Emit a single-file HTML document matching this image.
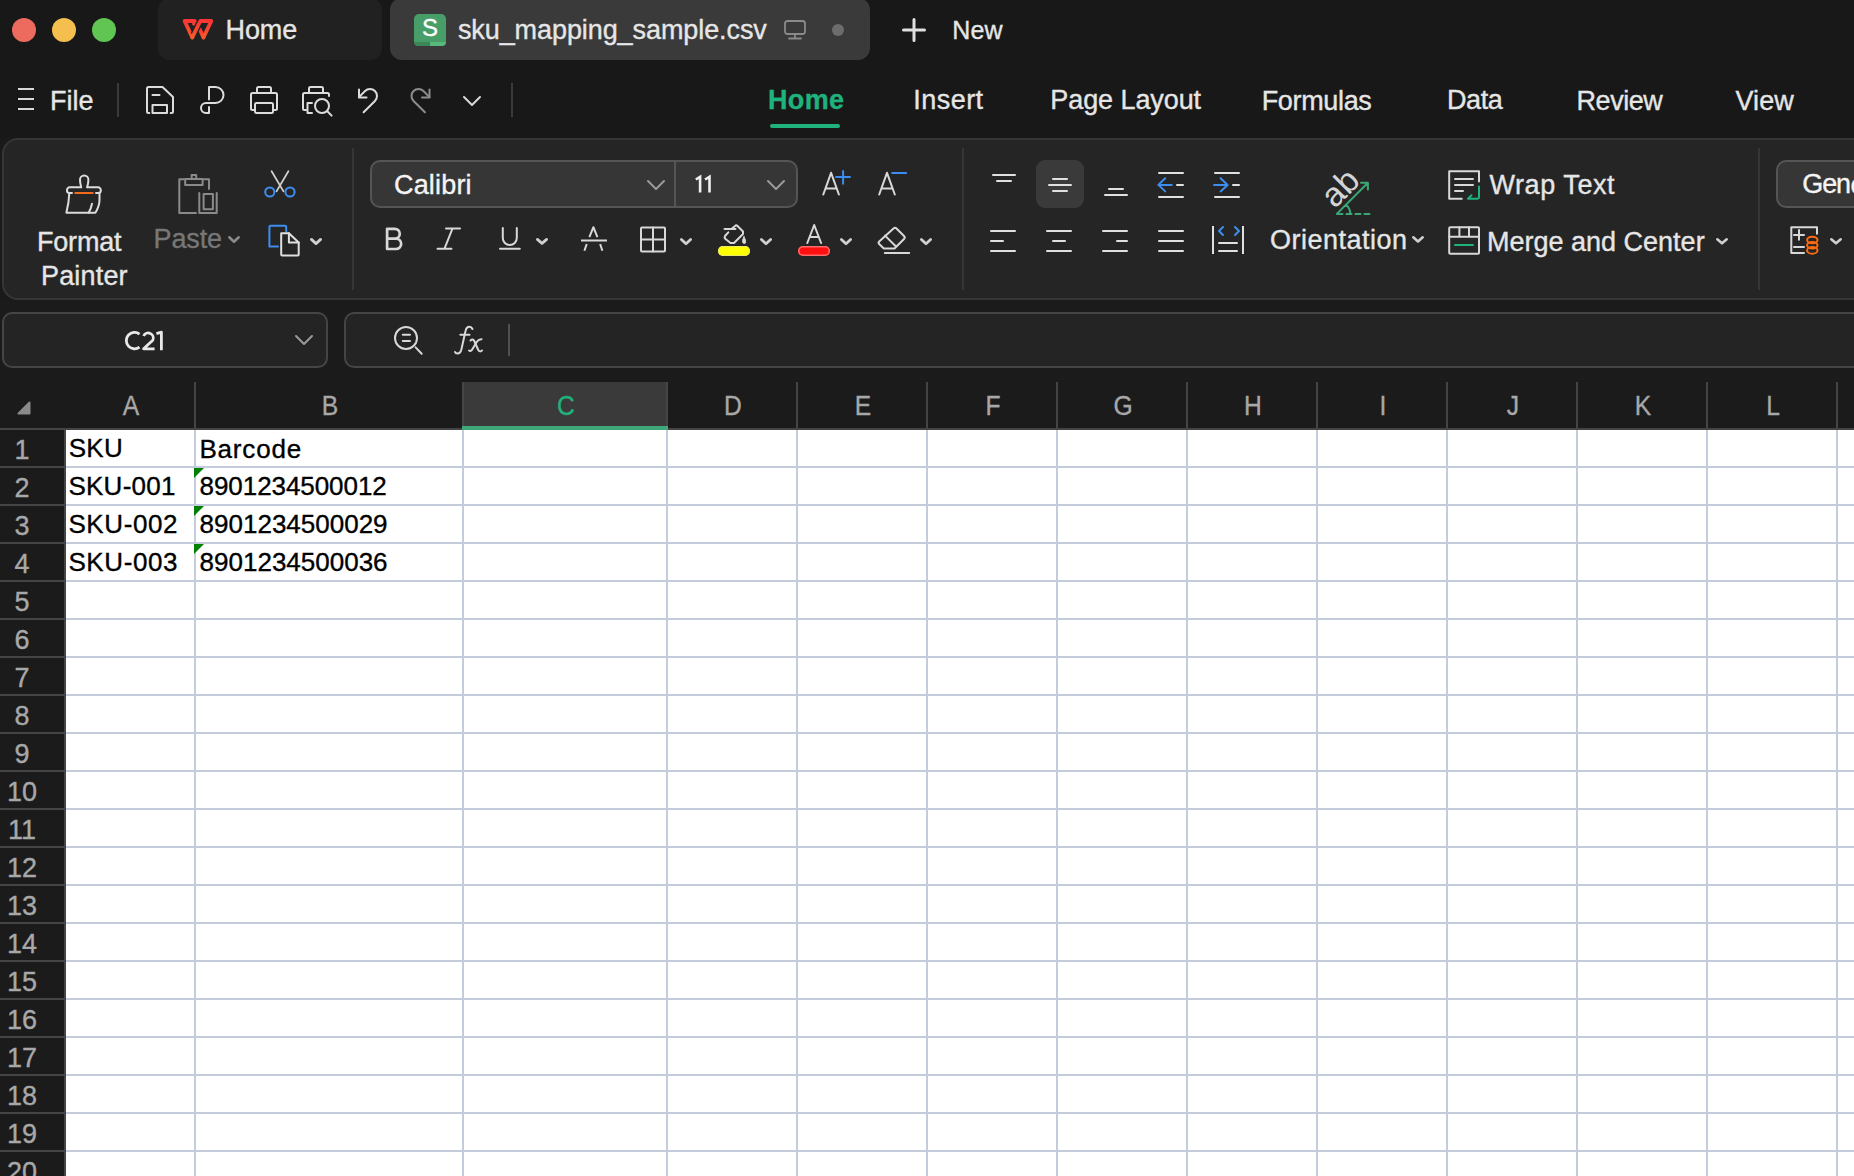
<!DOCTYPE html>
<html><head><meta charset="utf-8">
<style>
*{margin:0;padding:0;box-sizing:border-box}
html,body{width:1854px;height:1176px;overflow:hidden;background:#1a1a1a;font-family:"Liberation Sans",sans-serif;position:relative}
.a{position:absolute}
.t{position:absolute;white-space:nowrap;line-height:1;-webkit-text-stroke:0.35px currentColor}
svg{position:absolute;overflow:visible}
</style></head><body>
<div class="a" style="left:0px;top:0px;width:1854px;height:138px;background:#181818"></div>
<div class="a" style="left:12px;top:18px;width:24px;height:24px;border-radius:50%;background:#ec6a5e"></div>
<div class="a" style="left:52px;top:18px;width:24px;height:24px;border-radius:50%;background:#f4bf4f"></div>
<div class="a" style="left:92px;top:18px;width:24px;height:24px;border-radius:50%;background:#61c554"></div>
<div class="a" style="left:158px;top:-2px;width:224px;height:62px;border-radius:12px;background:#212121"></div>
<div class="a" style="left:390px;top:-2px;width:480px;height:62px;border-radius:12px;background:#3a3a3a"></div>
<svg style="left:178px;top:14px;" width="40" height="30" viewBox="0 0 40 30" fill="none" stroke="#dcdcdc" stroke-width="3.8" stroke-linecap="round" stroke-linejoin="round"><defs><linearGradient id="wg" x1="0" y1="0" x2="0" y2="1"><stop offset="0" stop-color="#fb3535"/><stop offset="1" stop-color="#f45a2a"/></linearGradient></defs><path d="M16 9.8 L16.8 7 H6.6 L14.3 23.4" stroke="url(#wg)"/><path d="M25.5 23.4 L21.9 15.6" stroke="url(#wg)"/><path d="M15.6 20.6 L21.2 9.2" stroke="#212121" stroke-width="6.4" stroke-linecap="butt"/><path d="M14.3 23.4 L22.3 7 H33.3 L25.5 23.4" stroke="url(#wg)"/></svg>
<div class="t" style="left:225.6px;top:17.0px;font-size:27px;color:#e6e6e6;letter-spacing:-0.13px;">Home</div>
<div class="a" style="left:414px;top:14px;width:32px;height:32px;border-radius:5px;background:#479e68;overflow:hidden"></div>
<div class="a" style="left:414px;top:42px;width:16px;height:4px;background:#3b8659;border-bottom-left-radius:5px"></div>
<div class="a" style="left:430px;top:42px;width:16px;height:4px;background:#57b97c;border-bottom-right-radius:5px"></div>
<div class="t" style="left:422.0px;top:16.0px;font-size:24px;color:#ffffff;">S</div>
<div class="t" style="left:457.9px;top:16.9px;font-size:27px;color:#e6e6e6;letter-spacing:-0.08px;">sku_mapping_sample.csv</div>
<svg style="left:784px;top:20px;" width="22" height="20" viewBox="0 0 22 20" fill="none" stroke="#8a8a8a" stroke-width="1.8" stroke-linecap="round" stroke-linejoin="round"><rect x="1" y="1" width="20" height="13" rx="2.5"/><path d="M11 14 V18 M5 18.5 H17"/></svg>
<div class="a" style="left:832px;top:24px;width:12px;height:12px;border-radius:50%;background:#6c6c6c"></div>
<svg style="left:902px;top:18px;" width="24" height="24" viewBox="0 0 24 24" fill="none" stroke="#e0e0e0" stroke-width="3" stroke-linecap="round" stroke-linejoin="round"><path d="M12 1.5 V22.5 M1.5 12 H22.5"/></svg>
<div class="t" style="left:952.2px;top:18.0px;font-size:25px;color:#e6e6e6;letter-spacing:0.20px;">New</div>
<svg style="left:18px;top:88px;" width="16" height="22" viewBox="0 0 16 22" fill="none" stroke="#d8d8d8" stroke-width="2" stroke-linecap="round" stroke-linejoin="round"><path d="M0 1 H16 M0 11 H16 M0 21 H16" stroke-linecap="butt"/></svg>
<div class="t" style="left:50.0px;top:88.3px;font-size:27px;color:#e6e6e6;">File</div>
<div class="a" style="left:117px;top:83px;width:2px;height:34px;background:#3a3a3a"></div>
<svg style="left:146px;top:86px;" width="28" height="28" viewBox="0 0 28 28" fill="none" stroke="#dcdcdc" stroke-width="2" stroke-linecap="round" stroke-linejoin="round"><path d="M3.3 27 H2.5 Q1 27 1 25.5 V2.5 Q1 1 2.5 1 H16.5 L27 11 V25.5 Q27 27 25.5 27 H24.7"/><path d="M6.5 9 H13.5"/><rect x="6.5" y="19" width="14.5" height="8"/></svg>
<svg style="left:200px;top:86px;" width="26" height="28" viewBox="0 0 26 28" fill="none" stroke="#dcdcdc" stroke-width="2" stroke-linecap="round" stroke-linejoin="round"><path d="M9 13.5 V1 H15.5 A8 8 0 0 1 15.5 17 H6 A5 5 0 0 0 6 27 H9 V21"/></svg>
<svg style="left:250px;top:86px;" width="28" height="28" viewBox="0 0 28 28" fill="none" stroke="#dcdcdc" stroke-width="2" stroke-linecap="round" stroke-linejoin="round"><path d="M7 7 V2.5 Q7 1 8.5 1 H19.5 Q21 1 21 2.5 V7"/><path d="M4 24 H2.5 Q1 24 1 22.5 V8.5 Q1 7 2.5 7 H25.5 Q27 7 27 8.5 V22.5 Q27 24 25.5 24 H24"/><rect x="5" y="17" width="18" height="10" rx="1.5"/></svg>
<svg style="left:302px;top:86px;" width="32" height="32" viewBox="0 0 32 32" fill="none" stroke="#dcdcdc" stroke-width="2" stroke-linecap="round" stroke-linejoin="round"><path d="M7 7 V2.5 Q7 1 8.5 1 H19.5 Q21 1 21 2.5 V7"/><path d="M4 24 H2.5 Q1 24 1 22.5 V8.5 Q1 7 2.5 7 H25.5 Q27 7 27 8.5 V10"/><path d="M10 17 H5.5 V27 H10"/><circle cx="20" cy="20" r="7"/><path d="M25.3 25.3 L29.6 29.6"/></svg>
<svg style="left:358px;top:88px;" width="24" height="26" viewBox="0 0 24 26" fill="none" stroke="#dcdcdc" stroke-width="2" stroke-linecap="round" stroke-linejoin="round"><path d="M1 9.1 L7.05 3.05 A7 7 0 0 1 16.95 12.95 L5.6 24.3"/><path d="M1 1.5 V9.5 H8.5"/></svg>
<svg style="left:410px;top:88px;" width="24" height="26" viewBox="0 0 24 26" fill="none" stroke="#8c8c8c" stroke-width="2" stroke-linecap="round" stroke-linejoin="round"><g transform="translate(20.5 0) scale(-1 1)"><path d="M1 9.1 L7.05 3.05 A7 7 0 0 1 16.95 12.95 L5.6 24.3"/><path d="M1 1.5 V9.5 H8.5"/></g></svg>
<svg style="left:463px;top:96px;" width="18" height="10" viewBox="0 0 18 10" fill="none" stroke="#d8d8d8" stroke-width="2" stroke-linecap="round" stroke-linejoin="round"><path d="M1 1 L9 9 L17 1"/></svg>
<div class="a" style="left:511px;top:83px;width:2px;height:34px;background:#3a3a3a"></div>
<div class="t" style="left:768.0px;top:87.0px;font-size:27px;color:#1fb27c;font-weight:700;letter-spacing:0.33px;">Home</div>
<div class="a" style="left:770px;top:124px;width:70px;height:4px;border-radius:2px;background:#1fb27c"></div>
<div class="t" style="left:913.2px;top:87.3px;font-size:27px;color:#e6e6e6;letter-spacing:0.48px;">Insert</div>
<div class="t" style="left:1050.3px;top:87.3px;font-size:27px;color:#e6e6e6;letter-spacing:-0.08px;">Page Layout</div>
<div class="t" style="left:1261.7px;top:88.3px;font-size:27px;color:#e6e6e6;letter-spacing:-0.34px;">Formulas</div>
<div class="t" style="left:1446.9px;top:87.3px;font-size:27px;color:#e6e6e6;letter-spacing:-0.37px;">Data</div>
<div class="t" style="left:1576.6px;top:88.3px;font-size:27px;color:#e6e6e6;letter-spacing:-0.48px;">Review</div>
<div class="t" style="left:1735.4px;top:88.3px;font-size:27px;color:#e6e6e6;letter-spacing:0.13px;">View</div>
<div class="a" style="left:2px;top:138px;width:1900px;height:162px;border-radius:16px;background:#252525;border:2px solid #363636"></div>
<svg style="left:64px;top:172px;" width="40" height="44" viewBox="0 0 40 44" fill="none" stroke="#dcdcdc" stroke-width="2" stroke-linecap="round" stroke-linejoin="round"><path d="M17.2 15.3 Q16 11 16 7.8 A4.2 4.2 0 0 1 24.4 7.8 Q24.4 11 23.2 15.3"/><path d="M17.2 15.3 H5.8 A2.85 2.85 0 0 0 5.8 21 H8"/><path d="M23.2 15.3 H34 A2.85 2.85 0 0 1 34 21 H32"/><path d="M5.3 21 Q5 30 2.4 40.8 H31.4 Q35.5 34 35.5 28 V21"/><path d="M28 31.8 Q27 37 24.6 40.8"/><path d="M10.5 21 H29.5" stroke="#f26b1d" stroke-linecap="butt"/></svg>
<div class="t" style="left:37.0px;top:229.0px;font-size:27px;color:#e6e6e6;letter-spacing:-0.20px;">Format</div>
<div class="t" style="left:41.0px;top:262.6px;font-size:27px;color:#e6e6e6;letter-spacing:0.17px;">Painter</div>
<svg style="left:176px;top:172px;" width="44" height="44" viewBox="0 0 44 44" fill="none" stroke="#8a8a8a" stroke-width="2" stroke-linecap="round" stroke-linejoin="round"><path d="M8 7.2 H3.3 V41 H20"/><path d="M28 7.2 H33 V17"/><path d="M9.2 7 H26.6 V13 H9.2 Z"/><path d="M15.7 3 H20.2 V7"/><path d="M15.7 7 V3"/><path d="M23.3 21 V41 H40.7 V21"/><rect x="27.6" y="22" width="9.3" height="15.2"/></svg>
<div class="t" style="left:153.6px;top:225.5px;font-size:27px;color:#777777;letter-spacing:-0.15px;">Paste</div>
<svg style="left:228px;top:235.5px;" width="12" height="7.0" viewBox="0 0 12 7.0" fill="none" stroke="#8a8a8a" stroke-width="2.6" stroke-linecap="round" stroke-linejoin="round"><path d="M1.30 1.30 L6.00 5.70 L10.70 1.30"/></svg>
<svg style="left:262px;top:168px;" width="36" height="32" viewBox="0 0 36 32" fill="none" stroke="#dcdcdc" stroke-width="2" stroke-linecap="round" stroke-linejoin="round"><path d="M9.6 3.2 L21.5 23.4" stroke="#cfcfcf" stroke-width="1.8"/><path d="M26.4 3.2 L14.5 23.4" stroke="#cfcfcf" stroke-width="1.8"/><circle cx="7.8" cy="24" r="4.6" stroke="#3d8ef0"/><circle cx="28" cy="24" r="4.6" stroke="#3d8ef0"/></svg>
<svg style="left:266px;top:222px;" width="36" height="36" viewBox="0 0 36 36" fill="none" stroke="#dcdcdc" stroke-width="2" stroke-linecap="round" stroke-linejoin="round"><path d="M20.2 9.5 V4.7 Q20.2 3.7 19.2 3.7 H4.4 Q3.4 3.7 3.4 4.7 V24.4 H12" stroke="#3d8ef0"/><path d="M15.2 11.3 H22.9 L32.7 20.5 V32.5 Q32.7 33.5 31.7 33.5 H16.2 Q15.2 33.5 15.2 32.5 Z" stroke="#e0e0e0"/><path d="M22.9 11.3 V20.5 H32.7" stroke="#e0e0e0"/></svg>
<svg style="left:310px;top:237.7px;" width="12" height="7.0" viewBox="0 0 12 7.0" fill="none" stroke="#d0d0d0" stroke-width="2.8" stroke-linecap="round" stroke-linejoin="round"><path d="M1.40 1.40 L6.00 5.60 L10.60 1.40"/></svg>
<div class="a" style="left:352px;top:148px;width:2px;height:142px;background:#363636"></div>
<div class="a" style="left:370px;top:160px;width:428px;height:48px;border-radius:10px;background:#363636;border:2px solid #555"></div>
<div class="a" style="left:674px;top:161px;width:2px;height:46px;background:#555"></div>
<div class="t" style="left:394.0px;top:171.7px;font-size:27px;color:#f4f4f4;letter-spacing:0.17px;">Calibri</div>
<svg style="left:647px;top:180px;" width="18" height="10" viewBox="0 0 18 10" fill="none" stroke="#9a9a9a" stroke-width="2" stroke-linecap="round" stroke-linejoin="round"><path d="M1 1 L9 9 L17 1"/></svg>
<svg style="left:690px;top:170px;" width="26" height="28" viewBox="0 0 26 28" fill="none" stroke="#f0f0f0" stroke-width="2.6" stroke-linecap="round" stroke-linejoin="round"><path d="M5.8 9.5 L10.1 6.8 V22.5 M15 9.5 L19.5 6.8 V22.5" stroke-linecap="butt" stroke-linejoin="miter"/></svg>
<svg style="left:767px;top:180px;" width="18" height="10" viewBox="0 0 18 10" fill="none" stroke="#9a9a9a" stroke-width="2" stroke-linecap="round" stroke-linejoin="round"><path d="M1 1 L9 9 L17 1"/></svg>
<svg style="left:820px;top:170px;" width="32" height="28" viewBox="0 0 32 28" fill="none" stroke="#dcdcdc" stroke-width="2" stroke-linecap="round" stroke-linejoin="round"><path d="M3.3 24.5 L11.1 2.8 L18.9 24.5 M5.9 18.6 H16.3" stroke="#d8d8d8"/><path d="M23.1 1 V13.7 M16.1 7 H30" stroke="#3d8ef0"/></svg>
<svg style="left:876px;top:170px;" width="32" height="28" viewBox="0 0 32 28" fill="none" stroke="#dcdcdc" stroke-width="2" stroke-linecap="round" stroke-linejoin="round"><path d="M3.2 24.5 L11 2.8 L18.8 24.5 M5.8 18.6 H16.2" stroke="#d8d8d8"/><path d="M16.2 3 H30.1" stroke="#3d8ef0"/></svg>
<svg style="left:384px;top:226px;" width="22" height="26" viewBox="0 0 22 26" fill="none" stroke="#d8d8d8" stroke-width="2.7" stroke-linecap="round" stroke-linejoin="round"><path d="M3.1 2.8 H10.8 A4.95 4.95 0 0 1 10.8 12.7 H3.1 Z M3.1 12.7 H12 A5.15 5.15 0 0 1 12 23 H3.1 Z"/></svg>
<svg style="left:436px;top:226px;" width="26" height="26" viewBox="0 0 26 26" fill="none" stroke="#d8d8d8" stroke-width="2" stroke-linecap="round" stroke-linejoin="round"><path d="M10 2.5 H24 M1.5 22.7 H15.5 M16.5 2.5 L8.5 22.7"/></svg>
<svg style="left:498px;top:226px;" width="24" height="26" viewBox="0 0 24 26" fill="none" stroke="#d8d8d8" stroke-width="2" stroke-linecap="round" stroke-linejoin="round"><path d="M4.8 2 V12 A7 7 0 0 0 18.8 12 V2 M2 22.7 H21.8"/></svg>
<svg style="left:536px;top:237.6px;" width="12" height="6.800000000000011" viewBox="0 0 12 6.800000000000011" fill="none" stroke="#cfcfcf" stroke-width="2.8" stroke-linecap="round" stroke-linejoin="round"><path d="M1.40 1.40 L6.00 5.40 L10.60 1.40"/></svg>
<svg style="left:580px;top:225px;" width="28" height="28" viewBox="0 0 28 28" fill="none" stroke="#d8d8d8" stroke-width="2" stroke-linecap="round" stroke-linejoin="round"><path d="M9.4 12.2 L13.4 2.2 L17.4 12.2 M1 15.6 H27 M6.7 19 L4.4 25.7 M20.1 19 L22.4 25.7" stroke-linecap="butt"/></svg>
<svg style="left:639px;top:225px;" width="28" height="28" viewBox="0 0 28 28" fill="none" stroke="#d8d8d8" stroke-width="2" stroke-linecap="round" stroke-linejoin="round"><rect x="2" y="2.4" width="24" height="24" rx="1"/><path d="M14 2.4 V26.4 M2 14.4 H26"/></svg>
<svg style="left:680px;top:237.6px;" width="12" height="7.200000000000017" viewBox="0 0 12 7.200000000000017" fill="none" stroke="#cfcfcf" stroke-width="2.8" stroke-linecap="round" stroke-linejoin="round"><path d="M1.40 1.40 L6.00 5.80 L10.60 1.40"/></svg>
<svg style="left:714px;top:218px;" width="40" height="30" viewBox="0 0 40 30" fill="none" stroke="#d8d8d8" stroke-width="2" stroke-linecap="round" stroke-linejoin="round"><path d="M14.3 14.3 L11 18 Q10 19.5 11.5 21 L16.5 25 H20 L29 16 V13.5 L23.5 8 Q22.2 6.8 21 8 L17.5 11"/><path d="M10.5 11 H21.5"/><path d="M30 18.6 Q27.7 22.5 28.8 24.8 Q30 26.2 31.6 25 Q32.3 22.5 30 18.6 Z" fill="#d8d8d8" stroke-width="0.8"/></svg>
<div class="a" style="left:718px;top:246px;width:32px;height:10px;border-radius:5px;background:#ffff00;box-shadow:0 0 0 1px #e9e96a inset"></div>
<svg style="left:760px;top:237.6px;" width="12" height="7.200000000000017" viewBox="0 0 12 7.200000000000017" fill="none" stroke="#cfcfcf" stroke-width="2.8" stroke-linecap="round" stroke-linejoin="round"><path d="M1.40 1.40 L6.00 5.80 L10.60 1.40"/></svg>
<svg style="left:804px;top:222px;" width="22" height="26" viewBox="0 0 22 26" fill="none" stroke="#d8d8d8" stroke-width="2" stroke-linecap="round" stroke-linejoin="round"><path d="M3.3 21 L10.2 3 L17.1 21 M5.6 15 H14.8"/></svg>
<div class="a" style="left:798px;top:246px;width:32px;height:10px;border-radius:5px;background:#ff1010;box-shadow:0 0 0 1.5px #ff6a6a inset"></div>
<svg style="left:840px;top:237.6px;" width="12" height="7.200000000000017" viewBox="0 0 12 7.200000000000017" fill="none" stroke="#cfcfcf" stroke-width="2.8" stroke-linecap="round" stroke-linejoin="round"><path d="M1.40 1.40 L6.00 5.80 L10.60 1.40"/></svg>
<svg style="left:872px;top:218px;" width="44" height="40" viewBox="0 0 44 40" fill="none" stroke="#d8d8d8" stroke-width="2" stroke-linecap="round" stroke-linejoin="round"><path d="M21.5 10.5 Q23 9 24.5 10.5 L32 18 Q33.5 19.5 32 21 L22.5 30.5 H11.8 L7.2 26 Q6 24.7 7.2 23.5 Z"/><path d="M13 17.6 L24 28.5"/><path d="M12.8 35 H37.2"/></svg>
<svg style="left:920px;top:237.6px;" width="12" height="7.200000000000017" viewBox="0 0 12 7.200000000000017" fill="none" stroke="#cfcfcf" stroke-width="2.8" stroke-linecap="round" stroke-linejoin="round"><path d="M1.40 1.40 L6.00 5.80 L10.60 1.40"/></svg>
<div class="a" style="left:962px;top:148px;width:2px;height:142px;background:#363636"></div>
<div class="a" style="left:992px;top:174px;width:24px;height:2px;background:#e0e0e0;border-radius:1px"></div>
<div class="a" style="left:996px;top:180px;width:16px;height:2px;background:#e0e0e0;border-radius:1px"></div>
<div class="a" style="left:1036px;top:160px;width:48px;height:48px;border-radius:9px;background:#3a3a3a"></div>
<div class="a" style="left:1052px;top:177.7px;width:16px;height:2px;background:#e0e0e0;border-radius:1px"></div>
<div class="a" style="left:1048px;top:183.9px;width:24px;height:2px;background:#e0e0e0;border-radius:1px"></div>
<div class="a" style="left:1052px;top:189.8px;width:16px;height:2px;background:#e0e0e0;border-radius:1px"></div>
<div class="a" style="left:1108px;top:188px;width:16px;height:2px;background:#e0e0e0;border-radius:1px"></div>
<div class="a" style="left:1104px;top:193.8px;width:24px;height:2px;background:#e0e0e0;border-radius:1px"></div>
<div class="a" style="left:1158px;top:171.9px;width:26px;height:2px;background:#e0e0e0;border-radius:1px"></div>
<div class="a" style="left:1158px;top:196px;width:26px;height:2px;background:#e0e0e0;border-radius:1px"></div>
<div class="a" style="left:1176px;top:183.9px;width:8px;height:2px;background:#e0e0e0;border-radius:1px"></div>
<svg style="left:1156px;top:176px;" width="18" height="18" viewBox="0 0 18 18" fill="none" stroke="#3d8ef0" stroke-width="2" stroke-linecap="round" stroke-linejoin="round"><path d="M2.4 8.9 H15.8 M9.2 2.3 L2.4 8.9 L9.2 15.4"/></svg>
<div class="a" style="left:1214px;top:171.9px;width:26px;height:2px;background:#e0e0e0;border-radius:1px"></div>
<div class="a" style="left:1214px;top:196px;width:26px;height:2px;background:#e0e0e0;border-radius:1px"></div>
<div class="a" style="left:1232.4px;top:183.9px;width:7.599999999999909px;height:2px;background:#e0e0e0;border-radius:1px"></div>
<svg style="left:1212px;top:176px;" width="18" height="18" viewBox="0 0 18 18" fill="none" stroke="#3d8ef0" stroke-width="2" stroke-linecap="round" stroke-linejoin="round"><path d="M2 8.9 H15.6 M8.6 2.3 L15.6 8.9 L8.6 15.4"/></svg>
<div class="a" style="left:990px;top:229.9px;width:26px;height:2px;background:#e0e0e0;border-radius:1px"></div>
<div class="a" style="left:990px;top:239.9px;width:14px;height:2px;background:#e0e0e0;border-radius:1px"></div>
<div class="a" style="left:990px;top:249.8px;width:26px;height:2px;background:#e0e0e0;border-radius:1px"></div>
<div class="a" style="left:1046px;top:229.9px;width:26px;height:2px;background:#e0e0e0;border-radius:1px"></div>
<div class="a" style="left:1052px;top:239.9px;width:14px;height:2px;background:#e0e0e0;border-radius:1px"></div>
<div class="a" style="left:1046px;top:249.8px;width:26px;height:2px;background:#e0e0e0;border-radius:1px"></div>
<div class="a" style="left:1102px;top:229.9px;width:26px;height:2px;background:#e0e0e0;border-radius:1px"></div>
<div class="a" style="left:1116px;top:239.9px;width:12px;height:2px;background:#e0e0e0;border-radius:1px"></div>
<div class="a" style="left:1102px;top:249.8px;width:26px;height:2px;background:#e0e0e0;border-radius:1px"></div>
<div class="a" style="left:1158px;top:229.9px;width:26px;height:2px;background:#e0e0e0;border-radius:1px"></div>
<div class="a" style="left:1158px;top:239.9px;width:26px;height:2px;background:#e0e0e0;border-radius:1px"></div>
<div class="a" style="left:1158px;top:249.8px;width:26px;height:2px;background:#e0e0e0;border-radius:1px"></div>
<div class="a" style="left:1212px;top:226px;width:2px;height:28px;background:#e0e0e0"></div>
<div class="a" style="left:1242px;top:226px;width:2px;height:28px;background:#e0e0e0"></div>
<div class="a" style="left:1218px;top:241.8px;width:20px;height:2px;background:#e0e0e0;border-radius:1px"></div>
<div class="a" style="left:1218px;top:249.8px;width:20px;height:2px;background:#e0e0e0;border-radius:1px"></div>
<svg style="left:1216px;top:225px;" width="26" height="14" viewBox="0 0 26 14" fill="none" stroke="#3d8ef0" stroke-width="2" stroke-linecap="round" stroke-linejoin="round"><path d="M7 2 L3 6 L7 10 M19 2 L23 6 L19 10"/></svg>
<div class="t" style="left:1321px;top:170px;width:36px;height:36px;font-size:34px;line-height:36px;color:#d4d4d4;-webkit-text-stroke:0;transform:rotate(-45deg);text-align:center">ab</div>
<svg style="left:1334px;top:178px;" width="40" height="40" viewBox="0 0 40 40" fill="none" stroke="#3ba776" stroke-width="2" stroke-linecap="round" stroke-linejoin="round"><path d="M2.8 35.9 L33.9 4.8 M27 4.8 H33.9 V11.6 M12.3 27 Q16 30 16.4 35.9 M3.2 35.9 H8.5 M12.5 35.9 H17.5 M21.5 35.9 H26.5 M30.5 35.9 H35.5"/></svg>
<div class="t" style="left:1270.0px;top:226.5px;font-size:27px;color:#e6e6e6;letter-spacing:0.50px;">Orientation</div>
<svg style="left:1412px;top:235.7px;" width="12" height="6.800000000000011" viewBox="0 0 12 6.800000000000011" fill="none" stroke="#cfcfcf" stroke-width="2.6" stroke-linecap="round" stroke-linejoin="round"><path d="M1.30 1.30 L6.00 5.50 L10.70 1.30"/></svg>
<svg style="left:1446px;top:168px;" width="36" height="34" viewBox="0 0 36 34" fill="none" stroke="#d8d8d8" stroke-width="2" stroke-linecap="round" stroke-linejoin="round"><path d="M15.8 30.8 H3.2 V3.2 H33 V13.4"/><path d="M9 11 H27 M9 17 H27 M9 23 H17"/></svg>
<svg style="left:1446px;top:168px;" width="36" height="34" viewBox="0 0 36 34" fill="none" stroke="#1db37a" stroke-width="2" stroke-linecap="round" stroke-linejoin="round"><path d="M33 18.5 V29 Q33 30.8 31.2 30.8 H22 L25.5 27.3"/></svg>
<div class="t" style="left:1489.5px;top:171.6px;font-size:27px;color:#e6e6e6;letter-spacing:0.56px;">Wrap Text</div>
<svg style="left:1446px;top:224px;" width="36" height="32" viewBox="0 0 36 32" fill="none" stroke="#d8d8d8" stroke-width="2" stroke-linecap="round" stroke-linejoin="round"><rect x="3.2" y="3.3" width="29.8" height="26.4" rx="1"/><path d="M3.2 12.7 H33 M13.4 3.3 V12.7 M23 3.3 V12.7"/></svg>
<div class="a" style="left:1454px;top:244px;width:20px;height:2px;background:#1db37a;border-radius:1px"></div>
<div class="t" style="left:1487.0px;top:228.6px;font-size:27px;color:#e6e6e6;">Merge and Center</div>
<svg style="left:1716px;top:237.8px;" width="12" height="6.599999999999994" viewBox="0 0 12 6.599999999999994" fill="none" stroke="#cfcfcf" stroke-width="2.6" stroke-linecap="round" stroke-linejoin="round"><path d="M1.30 1.30 L6.00 5.30 L10.70 1.30"/></svg>
<div class="a" style="left:1758px;top:148px;width:2px;height:142px;background:#363636"></div>
<div class="a" style="left:1776px;top:160px;width:200px;height:48px;border-radius:10px;background:#363636;border:2px solid #555"></div>
<div class="t" style="left:1802.2px;top:171.0px;font-size:27px;color:#f4f4f4;letter-spacing:-1.05px;">Gen</div>
<div class="t" style="left:1850.5px;top:172.0px;font-size:27px;color:#f4f4f4;">e</div>
<svg style="left:1788px;top:224px;" width="34" height="34" viewBox="0 0 34 34" fill="none" stroke="#d8d8d8" stroke-width="2" stroke-linecap="round" stroke-linejoin="round"><path d="M16 29 H3.3 V3.3 H29 V9.7"/><path d="M11 6 V15.8 M6 10.9 H16 M6 23 H16"/></svg>
<svg style="left:1804px;top:234px;" width="18" height="24" viewBox="0 0 18 24" fill="none" stroke="#ff6a13" stroke-width="2" stroke-linecap="round" stroke-linejoin="round"><ellipse cx="8.3" cy="6" rx="5.2" ry="3.3"/><ellipse cx="8.3" cy="11.2" rx="5.2" ry="3.3"/><ellipse cx="8.3" cy="16.4" rx="5.2" ry="3.3"/></svg>
<svg style="left:1830px;top:237.8px;" width="12" height="6.599999999999994" viewBox="0 0 12 6.599999999999994" fill="none" stroke="#cfcfcf" stroke-width="2.6" stroke-linecap="round" stroke-linejoin="round"><path d="M1.30 1.30 L6.00 5.30 L10.70 1.30"/></svg>
<div class="a" style="left:0px;top:300px;width:1854px;height:82px;background:#1b1b1b"></div>
<div class="a" style="left:2px;top:312px;width:326px;height:56px;border-radius:10px;background:#242424;border:2px solid #454545"></div>
<div class="a" style="left:344px;top:312px;width:1560px;height:56px;border-radius:10px;background:#242424;border:2px solid #454545"></div>
<svg style="left:0;top:0" width="200" height="400" viewBox="0 0 200 400" fill="none" stroke="#e8e8e8" stroke-width="2.8" stroke-linecap="butt" stroke-linejoin="round"><path d="M139.5 334.1 A8.2 8.2 0 1 0 139.5 347.1"/><path d="M143.6 336 A5 5 0 0 1 152.8 340.2 L143.6 348.8 H154.6"/><path d="M156.4 333.6 L161.4 332.2 V350.2"/></svg>
<svg style="left:295px;top:335px;" width="18" height="10" viewBox="0 0 18 10" fill="none" stroke="#9a9a9a" stroke-width="2" stroke-linecap="round" stroke-linejoin="round"><path d="M1 1 L9 9 L17 1"/></svg>
<svg style="left:392px;top:324px;" width="32" height="32" viewBox="0 0 32 32" fill="none" stroke="#d8d8d8" stroke-width="2" stroke-linecap="round" stroke-linejoin="round"><circle cx="14" cy="14" r="11"/><path d="M10.8 10.8 H18 M10.8 17 H18 M23.6 23.4 L29.7 29.7"/></svg>
<svg style="left:0;top:0" width="600" height="400" viewBox="0 0 600 400" fill="none" stroke="#d8d8d8" stroke-width="2" stroke-linecap="round" stroke-linejoin="round"><path d="M472.5 329 Q471 325.8 468 327 Q466 328 465.5 331 L461.5 349 Q460.5 353.5 457.5 353.5 Q455.5 353.5 455 352"/><path d="M460.3 334.8 H469.5"/><path d="M470.5 340.5 Q472.5 338.5 474 340.5 L478.3 350 Q479.8 352.5 482 350.5"/><path d="M481.5 339.2 Q479 339 477 341.5 L472.5 349 Q470.8 351.8 469 350.5"/></svg>
<div class="a" style="left:508px;top:324px;width:2px;height:32px;background:#505050"></div>
<div class="a" style="left:0px;top:382px;width:1854px;height:46px;background:#1b1b1b"></div>
<div class="a" style="left:0px;top:428px;width:1854px;height:2px;background:#444"></div>
<div class="a" style="left:0px;top:430px;width:64px;height:746px;background:#1b1b1b"></div>
<div class="a" style="left:64px;top:428px;width:2px;height:748px;background:#444"></div>
<div class="a" style="left:66px;top:430px;width:1788px;height:746px;background:#fff"></div>
<div class="a" style="left:462px;top:382px;width:206px;height:48px;background:#3a3a3a;border-left:2px solid #454545;border-right:2px solid #454545"></div>
<div class="a" style="left:462px;top:426px;width:206px;height:4px;background:#3fa77a"></div>
<div class="a" style="left:194px;top:382px;width:2px;height:46px;background:#444"></div>
<div class="a" style="left:194px;top:430px;width:2px;height:746px;background:#c3cbdd"></div>
<div class="a" style="left:462px;top:430px;width:2px;height:746px;background:#c3cbdd"></div>
<div class="a" style="left:666px;top:430px;width:2px;height:746px;background:#c3cbdd"></div>
<div class="a" style="left:796px;top:382px;width:2px;height:46px;background:#444"></div>
<div class="a" style="left:796px;top:430px;width:2px;height:746px;background:#c3cbdd"></div>
<div class="a" style="left:926px;top:382px;width:2px;height:46px;background:#444"></div>
<div class="a" style="left:926px;top:430px;width:2px;height:746px;background:#c3cbdd"></div>
<div class="a" style="left:1056px;top:382px;width:2px;height:46px;background:#444"></div>
<div class="a" style="left:1056px;top:430px;width:2px;height:746px;background:#c3cbdd"></div>
<div class="a" style="left:1186px;top:382px;width:2px;height:46px;background:#444"></div>
<div class="a" style="left:1186px;top:430px;width:2px;height:746px;background:#c3cbdd"></div>
<div class="a" style="left:1316px;top:382px;width:2px;height:46px;background:#444"></div>
<div class="a" style="left:1316px;top:430px;width:2px;height:746px;background:#c3cbdd"></div>
<div class="a" style="left:1446px;top:382px;width:2px;height:46px;background:#444"></div>
<div class="a" style="left:1446px;top:430px;width:2px;height:746px;background:#c3cbdd"></div>
<div class="a" style="left:1576px;top:382px;width:2px;height:46px;background:#444"></div>
<div class="a" style="left:1576px;top:430px;width:2px;height:746px;background:#c3cbdd"></div>
<div class="a" style="left:1706px;top:382px;width:2px;height:46px;background:#444"></div>
<div class="a" style="left:1706px;top:430px;width:2px;height:746px;background:#c3cbdd"></div>
<div class="a" style="left:1836px;top:382px;width:2px;height:46px;background:#444"></div>
<div class="a" style="left:1836px;top:430px;width:2px;height:746px;background:#c3cbdd"></div>
<div class="a" style="left:66px;top:466px;width:1788px;height:2px;background:#c3cbdd"></div>
<div class="a" style="left:0px;top:466px;width:64px;height:2px;background:#444"></div>
<div class="a" style="left:66px;top:504px;width:1788px;height:2px;background:#c3cbdd"></div>
<div class="a" style="left:0px;top:504px;width:64px;height:2px;background:#444"></div>
<div class="a" style="left:66px;top:542px;width:1788px;height:2px;background:#c3cbdd"></div>
<div class="a" style="left:0px;top:542px;width:64px;height:2px;background:#444"></div>
<div class="a" style="left:66px;top:580px;width:1788px;height:2px;background:#c3cbdd"></div>
<div class="a" style="left:0px;top:580px;width:64px;height:2px;background:#444"></div>
<div class="a" style="left:66px;top:618px;width:1788px;height:2px;background:#c3cbdd"></div>
<div class="a" style="left:0px;top:618px;width:64px;height:2px;background:#444"></div>
<div class="a" style="left:66px;top:656px;width:1788px;height:2px;background:#c3cbdd"></div>
<div class="a" style="left:0px;top:656px;width:64px;height:2px;background:#444"></div>
<div class="a" style="left:66px;top:694px;width:1788px;height:2px;background:#c3cbdd"></div>
<div class="a" style="left:0px;top:694px;width:64px;height:2px;background:#444"></div>
<div class="a" style="left:66px;top:732px;width:1788px;height:2px;background:#c3cbdd"></div>
<div class="a" style="left:0px;top:732px;width:64px;height:2px;background:#444"></div>
<div class="a" style="left:66px;top:770px;width:1788px;height:2px;background:#c3cbdd"></div>
<div class="a" style="left:0px;top:770px;width:64px;height:2px;background:#444"></div>
<div class="a" style="left:66px;top:808px;width:1788px;height:2px;background:#c3cbdd"></div>
<div class="a" style="left:0px;top:808px;width:64px;height:2px;background:#444"></div>
<div class="a" style="left:66px;top:846px;width:1788px;height:2px;background:#c3cbdd"></div>
<div class="a" style="left:0px;top:846px;width:64px;height:2px;background:#444"></div>
<div class="a" style="left:66px;top:884px;width:1788px;height:2px;background:#c3cbdd"></div>
<div class="a" style="left:0px;top:884px;width:64px;height:2px;background:#444"></div>
<div class="a" style="left:66px;top:922px;width:1788px;height:2px;background:#c3cbdd"></div>
<div class="a" style="left:0px;top:922px;width:64px;height:2px;background:#444"></div>
<div class="a" style="left:66px;top:960px;width:1788px;height:2px;background:#c3cbdd"></div>
<div class="a" style="left:0px;top:960px;width:64px;height:2px;background:#444"></div>
<div class="a" style="left:66px;top:998px;width:1788px;height:2px;background:#c3cbdd"></div>
<div class="a" style="left:0px;top:998px;width:64px;height:2px;background:#444"></div>
<div class="a" style="left:66px;top:1036px;width:1788px;height:2px;background:#c3cbdd"></div>
<div class="a" style="left:0px;top:1036px;width:64px;height:2px;background:#444"></div>
<div class="a" style="left:66px;top:1074px;width:1788px;height:2px;background:#c3cbdd"></div>
<div class="a" style="left:0px;top:1074px;width:64px;height:2px;background:#444"></div>
<div class="a" style="left:66px;top:1112px;width:1788px;height:2px;background:#c3cbdd"></div>
<div class="a" style="left:0px;top:1112px;width:64px;height:2px;background:#444"></div>
<div class="a" style="left:66px;top:1150px;width:1788px;height:2px;background:#c3cbdd"></div>
<div class="a" style="left:0px;top:1150px;width:64px;height:2px;background:#444"></div>
<div class="t" style="left:91.0px;width:80px;text-align:center;top:392px;font-size:28px;color:#a8a8a8;transform:scaleX(0.88)">A</div>
<div class="t" style="left:290.0px;width:80px;text-align:center;top:392px;font-size:28px;color:#a8a8a8;transform:scaleX(0.88)">B</div>
<div class="t" style="left:526.0px;width:80px;text-align:center;top:392px;font-size:28px;color:#22b07b;transform:scaleX(0.88)">C</div>
<div class="t" style="left:693.0px;width:80px;text-align:center;top:392px;font-size:28px;color:#a8a8a8;transform:scaleX(0.88)">D</div>
<div class="t" style="left:823.0px;width:80px;text-align:center;top:392px;font-size:28px;color:#a8a8a8;transform:scaleX(0.88)">E</div>
<div class="t" style="left:953.0px;width:80px;text-align:center;top:392px;font-size:28px;color:#a8a8a8;transform:scaleX(0.88)">F</div>
<div class="t" style="left:1083.0px;width:80px;text-align:center;top:392px;font-size:28px;color:#a8a8a8;transform:scaleX(0.88)">G</div>
<div class="t" style="left:1213.0px;width:80px;text-align:center;top:392px;font-size:28px;color:#a8a8a8;transform:scaleX(0.88)">H</div>
<div class="t" style="left:1343.0px;width:80px;text-align:center;top:392px;font-size:28px;color:#a8a8a8;transform:scaleX(0.88)">I</div>
<div class="t" style="left:1473.0px;width:80px;text-align:center;top:392px;font-size:28px;color:#a8a8a8;transform:scaleX(0.88)">J</div>
<div class="t" style="left:1603.0px;width:80px;text-align:center;top:392px;font-size:28px;color:#a8a8a8;transform:scaleX(0.88)">K</div>
<div class="t" style="left:1733.0px;width:80px;text-align:center;top:392px;font-size:28px;color:#a8a8a8;transform:scaleX(0.88)">L</div>
<div class="t" style="left:-18px;width:80px;text-align:center;top:437px;font-size:27px;color:#a8a8a8">1</div>
<div class="t" style="left:-18px;width:80px;text-align:center;top:475px;font-size:27px;color:#a8a8a8">2</div>
<div class="t" style="left:-18px;width:80px;text-align:center;top:513px;font-size:27px;color:#a8a8a8">3</div>
<div class="t" style="left:-18px;width:80px;text-align:center;top:551px;font-size:27px;color:#a8a8a8">4</div>
<div class="t" style="left:-18px;width:80px;text-align:center;top:589px;font-size:27px;color:#a8a8a8">5</div>
<div class="t" style="left:-18px;width:80px;text-align:center;top:627px;font-size:27px;color:#a8a8a8">6</div>
<div class="t" style="left:-18px;width:80px;text-align:center;top:665px;font-size:27px;color:#a8a8a8">7</div>
<div class="t" style="left:-18px;width:80px;text-align:center;top:703px;font-size:27px;color:#a8a8a8">8</div>
<div class="t" style="left:-18px;width:80px;text-align:center;top:741px;font-size:27px;color:#a8a8a8">9</div>
<div class="t" style="left:-18px;width:80px;text-align:center;top:779px;font-size:27px;color:#a8a8a8">10</div>
<div class="t" style="left:-18px;width:80px;text-align:center;top:817px;font-size:27px;color:#a8a8a8">11</div>
<div class="t" style="left:-18px;width:80px;text-align:center;top:855px;font-size:27px;color:#a8a8a8">12</div>
<div class="t" style="left:-18px;width:80px;text-align:center;top:893px;font-size:27px;color:#a8a8a8">13</div>
<div class="t" style="left:-18px;width:80px;text-align:center;top:931px;font-size:27px;color:#a8a8a8">14</div>
<div class="t" style="left:-18px;width:80px;text-align:center;top:969px;font-size:27px;color:#a8a8a8">15</div>
<div class="t" style="left:-18px;width:80px;text-align:center;top:1007px;font-size:27px;color:#a8a8a8">16</div>
<div class="t" style="left:-18px;width:80px;text-align:center;top:1045px;font-size:27px;color:#a8a8a8">17</div>
<div class="t" style="left:-18px;width:80px;text-align:center;top:1083px;font-size:27px;color:#a8a8a8">18</div>
<div class="t" style="left:-18px;width:80px;text-align:center;top:1121px;font-size:27px;color:#a8a8a8">19</div>
<div class="t" style="left:-18px;width:80px;text-align:center;top:1159px;font-size:27px;color:#a8a8a8">20</div>
<svg style="left:17px;top:401px;" width="14" height="14" viewBox="0 0 14 14" fill="none" stroke="#8a8a8a" stroke-width="2" stroke-linecap="round" stroke-linejoin="round"><path d="M12.5 1.5 V12.5 H1.5 Z" fill="#8a8a8a"/></svg>
<div class="t" style="left:68.8px;top:435.0px;font-size:26px;color:#000;letter-spacing:0.20px;">SKU</div>
<div class="t" style="left:199.4px;top:436.0px;font-size:26px;color:#000;letter-spacing:0.82px;">Barcode</div>
<div class="t" style="left:68.4px;top:473.0px;font-size:26px;color:#000;letter-spacing:0.27px;">SKU-001</div>
<div class="t" style="left:199.6px;top:473.0px;font-size:26px;color:#000;letter-spacing:-0.07px;">8901234500012</div>
<svg style="left:194px;top:468px;" width="10" height="10" viewBox="0 0 10 10" fill="none" stroke="none" stroke-width="0" stroke-linecap="round" stroke-linejoin="round"><path d="M0 0 H10 L0 10 Z" fill="#008000"/></svg>
<div class="t" style="left:68.4px;top:511.0px;font-size:26px;color:#000;letter-spacing:0.60px;">SKU-002</div>
<div class="t" style="left:199.6px;top:511.0px;font-size:26px;color:#000;">8901234500029</div>
<svg style="left:194px;top:506px;" width="10" height="10" viewBox="0 0 10 10" fill="none" stroke="none" stroke-width="0" stroke-linecap="round" stroke-linejoin="round"><path d="M0 0 H10 L0 10 Z" fill="#008000"/></svg>
<div class="t" style="left:68.4px;top:549.0px;font-size:26px;color:#000;letter-spacing:0.60px;">SKU-003</div>
<div class="t" style="left:199.6px;top:549.0px;font-size:26px;color:#000;">8901234500036</div>
<svg style="left:194px;top:544px;" width="10" height="10" viewBox="0 0 10 10" fill="none" stroke="none" stroke-width="0" stroke-linecap="round" stroke-linejoin="round"><path d="M0 0 H10 L0 10 Z" fill="#008000"/></svg>
</body></html>
